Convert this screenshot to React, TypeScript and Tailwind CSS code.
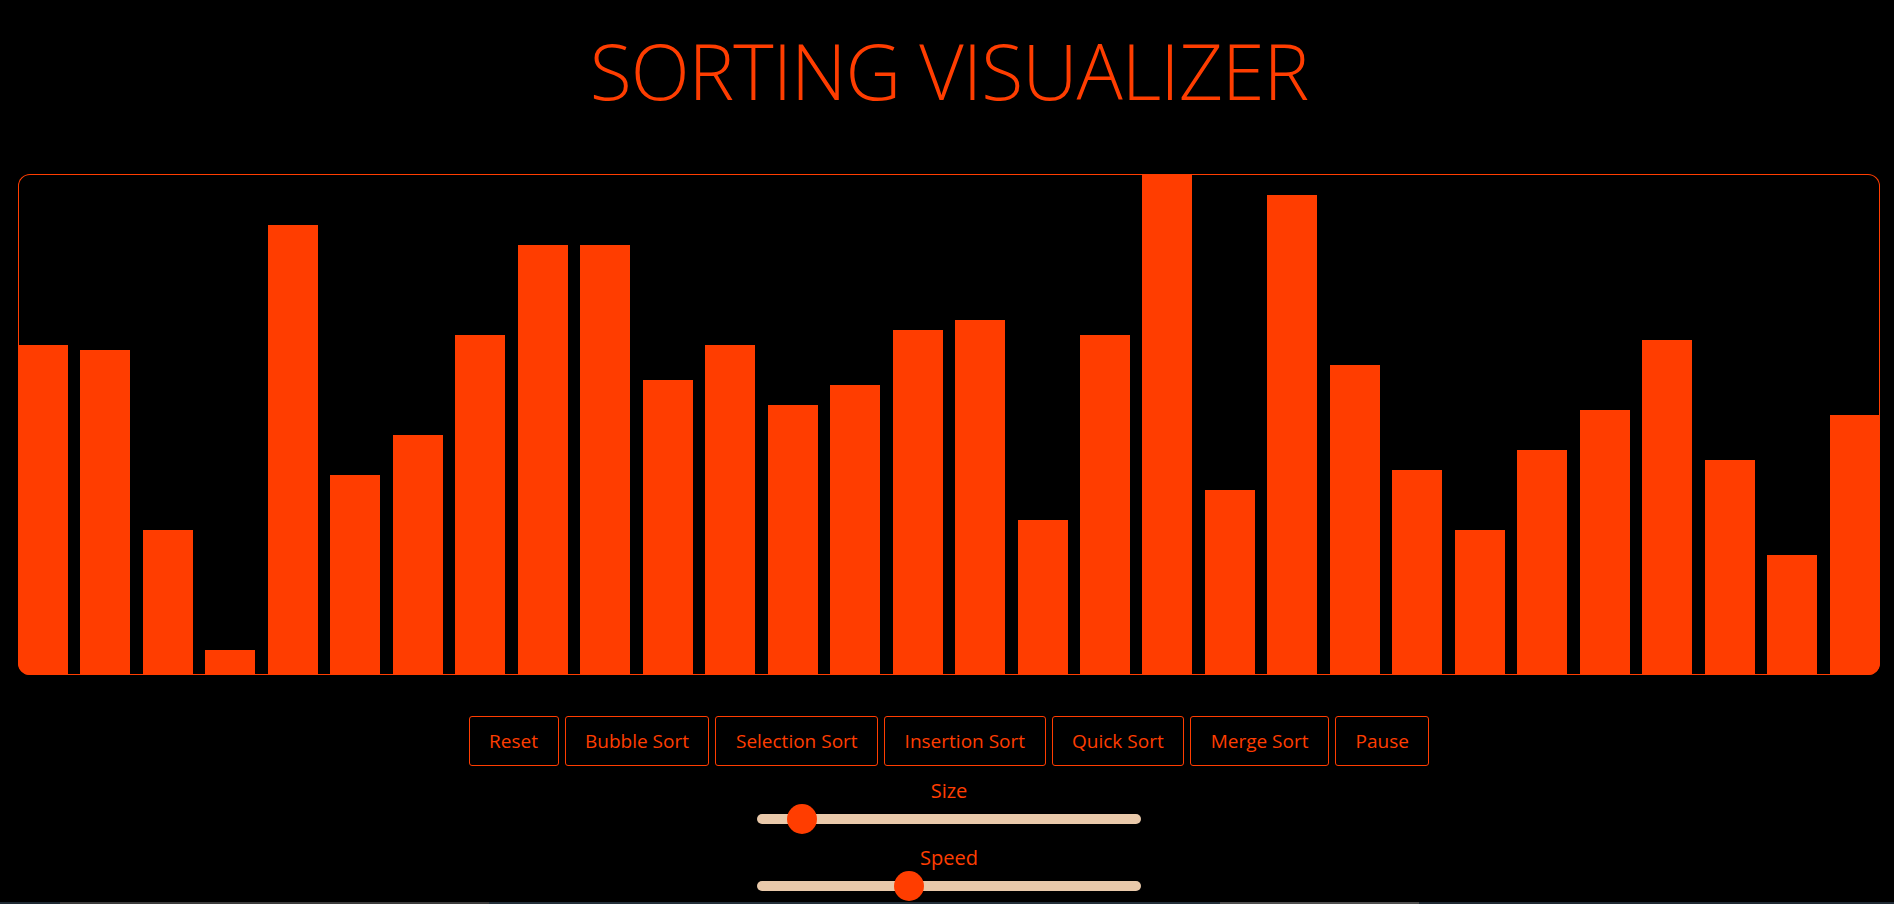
const BARS = [330, 325, 145, 25, 450, 200, 240, 340, 430, 430, 295, 330, 270, 290, 345, 355, 155, 340, 500, 185, 480, 310, 205, 145, 225, 265, 335, 215, 120, 260];

const BUTTONS = ["Reset", "Bubble Sort", "Selection Sort", "Insertion Sort", "Quick Sort", "Merge Sort", "Pause"];

function Slider({ label, value, gapTop }: { label: string; value: number; gapTop: string }) {
  return (
    <div className={`flex flex-col items-center ${gapTop}`}>
      <span className="text-[20px] leading-[26px] text-[#ff3d00]">{label}</span>
      <div className="relative mt-[10px] h-[10px] w-[384px] rounded-full bg-[#e9c9aa]">
        <div
          className="absolute top-1/2 h-[30px] w-[30px] -translate-y-1/2 rounded-full bg-[#ff3d00]"
          style={{ left: `${value * 354}px` }}
        />
      </div>
    </div>
  );
}

export default function App() {
  return (
    <div className="flex h-[904px] flex-col overflow-hidden bg-black pl-[4px] font-['Open_Sans',sans-serif] text-[#ff3d00]">
      <h1 className="pt-[23px] text-center text-[77px] font-light leading-[96px] tracking-[-1px]">SORTING VISUALIZER</h1>

      <div className="mx-[14px] mt-[55px] flex h-[501px] shrink-0 items-end justify-between overflow-hidden rounded-xl shadow-[inset_0_0_0_1px_#ff3d00]">
        {BARS.map((h, i) => (
          <div key={i} className="w-[50px] bg-[#ff3d00]" style={{ height: `${h}px` }} />
        ))}
      </div>

      <div className="mt-[41px] flex justify-center gap-[6px]">
        {BUTTONS.map((b) => (
          <button
            key={b}
            type="button"
            className="h-[50px] rounded-[3px] border border-[#ff3d00] bg-black px-[19.5px] text-[19px] text-[#ff3d00]"
          >
            {b}
          </button>
        ))}
      </div>

      <Slider label="Size" value={0.085} gapTop="mt-[12px]" />
      <Slider label="Speed" value={0.387} gapTop="mt-[21px]" />

      <div className="-ml-[4px] mt-auto flex h-[2px] shrink-0">
        <div className="w-[60px] bg-[#1f2a33]" />
        <div className="w-[429px] bg-[#3c3c3c]" />
        <div className="w-[731px] bg-[#24303a]" />
        <div className="w-[199px] bg-[#4f4f4f]" />
        <div className="flex-1 bg-[#202a33]" />
      </div>
    </div>
  );
}
